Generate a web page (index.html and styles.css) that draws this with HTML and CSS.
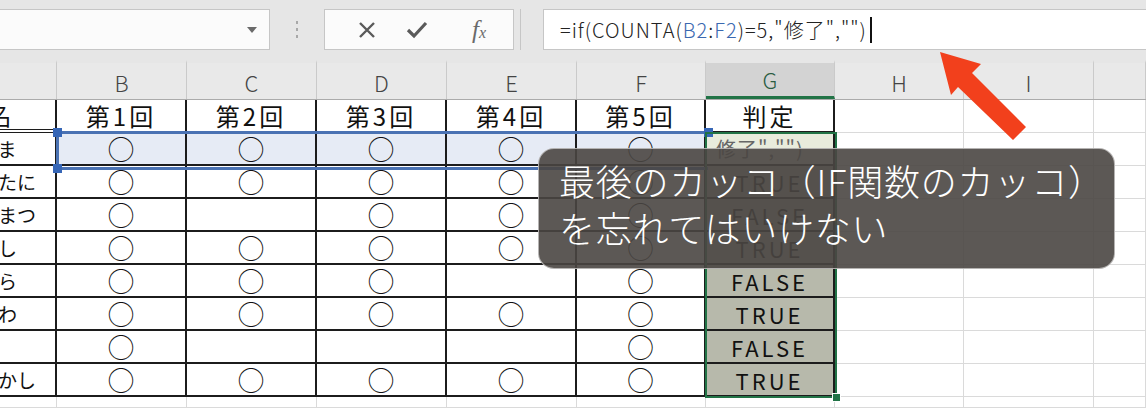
FILE: index.html
```html
<!DOCTYPE html>
<html lang="ja">
<head>
    <meta charset="UTF-8">
    <title>IF関数のカッコ</title>
    <link rel="stylesheet" href="styles.css">
</head>
<body>
    <div class="toolbar">
        <div class="namebox"><span class="caret"></span></div>
        <div class="grip"><i></i><i></i><i></i></div>
        <div class="fxbox">
            <svg class="ico-x" width="20" height="20" viewBox="0 0 20 20"><path d="M3 3 L17 17 M17 3 L3 17" stroke="#5a5a5a" stroke-width="2.4" fill="none"/></svg>
            <svg class="ico-ok" width="22" height="20" viewBox="0 0 22 20"><path d="M2 10 L8 16 L20 3" stroke="#5a5a5a" stroke-width="3.2" fill="none"/></svg>
            <span class="fx">f<small>x</small></span>
        </div>
        <div class="sliver"></div>
        <div class="formula">=if(COUNTA(<span class="ref">B2</span>:<span class="ref">F2</span>)=5,"修了","")<span class="cursor"></span></div>
    </div>

    <div class="sheet">
        <div class="row head">
            <div class="h">A</div><div class="h">B</div><div class="h">C</div><div class="h">D</div><div class="h">E</div>
            <div class="h">F</div><div class="h gh">G</div><div class="h">H</div><div class="h">I</div><div class="h"></div>
        </div>
        <div class="row">
            <div class="c t name-h dbl">氏名</div><div class="c t">第1回</div><div class="c t">第2回</div><div class="c t">第3回</div><div class="c t">第4回</div>
            <div class="c t">第5回</div><div class="c t">判定</div><div class="c"></div><div class="c"></div><div class="c"></div>
        </div>
        <div class="row">
            <div class="c t name">山口　たま</div><div class="c t o hl">○</div><div class="c t o hl">○</div><div class="c t o hl">○</div><div class="c t o hl">○</div>
            <div class="c t o hl">○</div><div class="c t g2">修了","")</div><div class="c"></div><div class="c"></div><div class="c"></div>
        </div>
        <div class="row">
            <div class="c t name">長谷川　たに</div><div class="c t o">○</div><div class="c t o">○</div><div class="c t o">○</div><div class="c t o">○</div>
            <div class="c t o">○</div><div class="c t g">TRUE</div><div class="c"></div><div class="c"></div><div class="c"></div>
        </div>
        <div class="row">
            <div class="c t name">佐々木　まつ</div><div class="c t o">○</div><div class="c t o"></div><div class="c t o">○</div><div class="c t o">○</div>
            <div class="c t o">○</div><div class="c t g">FALSE</div><div class="c"></div><div class="c"></div><div class="c"></div>
        </div>
        <div class="row">
            <div class="c t name">森　たかし</div><div class="c t o">○</div><div class="c t o">○</div><div class="c t o">○</div><div class="c t o">○</div>
            <div class="c t o">○</div><div class="c t g">TRUE</div><div class="c"></div><div class="c"></div><div class="c"></div>
        </div>
        <div class="row">
            <div class="c t name">上田　そら</div><div class="c t o">○</div><div class="c t o">○</div><div class="c t o">○</div><div class="c t o"></div>
            <div class="c t o">○</div><div class="c t g">FALSE</div><div class="c"></div><div class="c"></div><div class="c"></div>
        </div>
        <div class="row">
            <div class="c t name">吉田　みわ</div><div class="c t o">○</div><div class="c t o">○</div><div class="c t o">○</div><div class="c t o">○</div>
            <div class="c t o">○</div><div class="c t g">TRUE</div><div class="c"></div><div class="c"></div><div class="c"></div>
        </div>
        <div class="row">
            <div class="c t name"></div><div class="c t o">○</div><div class="c t o"></div><div class="c t o"></div><div class="c t o"></div>
            <div class="c t o">○</div><div class="c t g">FALSE</div><div class="c"></div><div class="c"></div><div class="c"></div>
        </div>
        <div class="row">
            <div class="c t name">石井　たかし</div><div class="c t o">○</div><div class="c t o">○</div><div class="c t o">○</div><div class="c t o">○</div>
            <div class="c t o">○</div><div class="c t g">TRUE</div><div class="c"></div><div class="c"></div><div class="c"></div>
        </div>
        <div class="row tail">
            <div class="c"></div><div class="c"></div><div class="c"></div><div class="c"></div><div class="c"></div>
            <div class="c"></div><div class="c"></div><div class="c"></div><div class="c"></div><div class="c"></div>
        </div>
    </div>

    <!-- range B2:F2 picked up by the formula -->
    <div class="sel">
        <span class="hd hd-tl"></span><span class="hd hd-bl"></span><span class="hd hd-tr"></span>
    </div>
    <!-- selected G2:G9 -->
    <div class="gsel"><span class="fill"></span></div>

    <div class="bubble">最後のカッコ（IF関数のカッコ）<br>を忘れてはいけない</div>

    <svg class="arrow" width="1146" height="408" viewBox="0 0 1146 408">
        <polygon points="940,52 981,64 972,73 1026,127 1013,140 958,87 951,95" fill="#f2401c"/>
    </svg>
</body>
</html>
```

FILE: styles.css
```css
* {
    box-sizing: border-box;
}
body {
    margin: 0;
    width: 1146px;
    height: 408px;
    overflow: hidden;
    position: relative;
    background: #fff;
    font-family: "Noto Sans CJK JP", "Noto Sans", sans-serif;
}

/* formula bar */
.toolbar {
    display: flex;
    align-items: flex-start;
    height: 60px;
    padding-top: 9px;
    background: #e6e6e6;
}
.namebox {
    display: flex;
    align-items: center;
    justify-content: flex-end;
    width: 272px;
    height: 41px;
    margin-left: -2px;
    padding-right: 12px;
    background: #fbfbfb;
    border: 1px solid #c6c6c6;
}
.caret {
    border-left: 5px solid transparent;
    border-right: 5px solid transparent;
    border-top: 6px solid #6a6a6a;
}
.grip {
    display: flex;
    flex-direction: column;
    align-items: center;
    gap: 4px;
    width: 54px;
    padding-top: 12px;
    i {
        width: 2px;
        height: 3px;
        background: #a8a8a8;
    }
}
.fxbox {
    display: flex;
    align-items: center;
    width: 190px;
    height: 41px;
    padding-left: 32px;
    background: #fbfbfb;
    border: 1px solid #c6c6c6;
    .ico-x {
        margin-right: 29px;
    }
    .ico-ok {
        margin-right: 44px;
    }
}
.fx {
    font-family: "Liberation Serif", serif;
    font-style: italic;
    font-size: 25px;
    color: #6a6a6a;
    small {
        font-size: 16px;
    }
}
.sliver {
    width: 23px;
    height: 41px;
    margin-left: 6px;
    border-left: 1px solid #c6c6c6;
}
.formula {
    flex: 1;
    display: flex;
    align-items: center;
    height: 41px;
    padding-left: 16px;
    background: #fff;
    border: 1px solid #c6c6c6;
    border-right: none;
    font-size: 20px;
    font-weight: 300;
    letter-spacing: 1px;
    color: #222;
    .ref {
        color: #3a68b0;
    }
}
.cursor {
    width: 2px;
    height: 26px;
    margin-left: 3px;
    background: #111;
}

/* sheet */
.sheet {
    width: 1226px;
    margin-left: -80px;
}
.row {
    display: grid;
    grid-template-columns: 137px repeat(4, 130px) 129px 129px 129px 130px 1fr;
    height: 33px;
}
.tail {
    height: 11px;
}
.head {
    height: 40px;
    background: #e9e9e9;
    border-bottom: 1px solid #ababab;
}
.h {
    display: flex;
    justify-content: center;
    align-items: flex-end;
    padding-bottom: 1px;
    border-right: 1px solid #cacaca;
    border-top: 3px solid #e6e6e6;
    font-size: 22px;
    font-weight: 300;
    color: #444;
}
.gh {
    background: #d3d3d3;
    border-bottom: 3px solid #217346;
    color: #2b5c42;
}
.c {
    display: flex;
    align-items: center;
    justify-content: center;
    overflow: hidden;
    white-space: nowrap;
    border-right: 1px solid #dadada;
    border-bottom: 1px solid #dadada;
    font-size: 24px;
    line-height: 1;
    letter-spacing: 3px;
    color: #111;
}
.t {
    border-right: 2px solid #1c1c1c;
    border-bottom: 2px solid #1c1c1c;
}
.dbl {
    border-bottom: 4px double #1c1c1c;
}
.name {
    justify-content: flex-start;
    padding-left: 2px;
    font-size: 19px;
    letter-spacing: 0;
}
.o {
    font-size: 27px;
    font-weight: 300;
    letter-spacing: 0;
}
.hl {
    background: #e6ebf5;
}
.g {
    background: #b7b9ab;
    font-size: 22px;
    letter-spacing: 3px;
}
.g2 {
    justify-content: flex-start;
    padding-left: 10px;
    background: #e8ebdc;
    color: #666;
    font-size: 20px;
    letter-spacing: 1px;
}

/* selection frames */
.sel {
    position: absolute;
    left: 56px;
    top: 131px;
    width: 652px;
    height: 39px;
    border-top: 3px solid #4a72b3;
    border-bottom: 3px solid #4a72b3;
    border-left: 3px solid #4a72b3;
}
.hd {
    position: absolute;
    width: 9px;
    height: 9px;
    background: #3666b6;
}
.hd-tl { left: -6px; top: -6px; }
.hd-bl { left: -6px; bottom: -6px; }
.hd-tr { right: -5px; top: -6px; }
.gsel {
    position: absolute;
    left: 705px;
    top: 132px;
    width: 132px;
    height: 266px;
    border: 2px solid #217346;
}
.fill {
    position: absolute;
    right: -6px;
    bottom: -6px;
    width: 9px;
    height: 9px;
    background: #217346;
    border: 1px solid #fff;
}

/* caption */
.bubble {
    position: absolute;
    left: 538px;
    top: 148px;
    width: 577px;
    height: 121px;
    padding: 8px 0 0 20px;
    border-radius: 16px;
    background: rgba(74, 70, 66, 0.9);
    border: 1px solid rgba(255, 255, 255, 0.55);
    color: #fff;
    font-size: 36px;
    font-weight: 300;
    line-height: 47px;
    letter-spacing: 0.8px;
    white-space: nowrap;
}
.arrow {
    position: absolute;
    left: 0;
    top: 0;
    pointer-events: none;
}
```
